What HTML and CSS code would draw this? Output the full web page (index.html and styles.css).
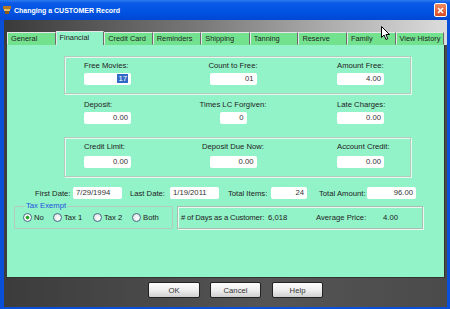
FILE: index.html
```html
<!DOCTYPE html>
<html lang="en">
<head>
<meta charset="UTF-8">
<title>Changing a CUSTOMER Record</title>
<link rel="stylesheet" href="styles.css">
</head>
<body>

<div class="window">
    <!-- Title Bar -->
    <div class="titlebar">
        <svg class="app-icon" width="8" height="8" viewBox="0 0 8 8">
            <rect x="0" y="0" width="8" height="3" fill="#b07a2a"/>
            <rect x="1" y="3" width="6" height="2" fill="#e8c060"/>
            <rect x="2" y="5" width="4" height="3" fill="#8a5a1a"/>
        </svg>
        <span class="title">Changing a CUSTOMER Record</span>
        <span class="close-btn">
            <svg width="7" height="7" viewBox="0 0 7 7">
                <path d="M1 1 L6 6 M6 1 L1 6" stroke="#fff" stroke-width="1.6"/>
            </svg>
        </span>
    </div>

    <div class="frame">
        <!-- Tabs -->
        <div class="tabstrip">
            <span class="tab">General</span>
            <span class="tab active">Financial</span>
            <span class="tab">Credit Card</span>
            <span class="tab">Reminders</span>
            <span class="tab">Shipping</span>
            <span class="tab">Tanning</span>
            <span class="tab">Reserve</span>
            <span class="tab">Family</span>
            <span class="tab">View History</span>
        </div>

        <!-- Financial Panel -->
        <div class="panel">
            <div class="field-row group">
                <div class="cell c1"><label>Free Movies:</label><span class="box"><span class="selected">17</span></span></div>
                <div class="cell c2"><label>Count to Free:</label><span class="box">01</span></div>
                <div class="cell c3"><label>Amount Free:</label><span class="box">4.00</span></div>
            </div>
            <div class="field-row plain">
                <div class="cell c1"><label>Deposit:</label><span class="box">0.00</span></div>
                <div class="cell c2"><label>Times LC Forgiven:</label><span class="box narrow">0</span></div>
                <div class="cell c3"><label>Late Charges:</label><span class="box">0.00</span></div>
            </div>
            <div class="field-row group credit">
                <div class="cell c1"><label>Credit Limit:</label><span class="box">0.00</span></div>
                <div class="cell c2"><label>Deposit Due Now:</label><span class="box">0.00</span></div>
                <div class="cell c3"><label>Account Credit:</label><span class="box">0.00</span></div>
            </div>

            <!-- Dates and totals -->
            <div class="date-row">
                <label class="dl dl-first">First Date:</label>
                <span class="box date">7/29/1994</span>
                <label class="dl dl-last">Last Date:</label>
                <span class="box date">1/19/2011</span>
                <label class="dl dl-items">Total Items:</label>
                <span class="box items">24</span>
                <label class="dl dl-amount">Total Amount:</label>
                <span class="box date right">96.00</span>
            </div>

            <div class="bottom-row">
                <fieldset class="tax">
                    <legend>Tax Exempt</legend>
                    <div class="radios">
                        <span class="opt o1"><span class="radio checked"></span>No</span>
                        <span class="opt o2"><span class="radio"></span>Tax 1</span>
                        <span class="opt o3"><span class="radio"></span>Tax 2</span>
                        <span class="opt"><span class="radio"></span>Both</span>
                    </div>
                </fieldset>
                <div class="days-box">
                    <span class="d1"># of Days as a Customer:</span>
                    <span class="d2">6,018</span>
                    <span class="d3">Average Price:</span>
                    <span>4.00</span>
                </div>
            </div>
        </div>

        <!-- Dialog Buttons -->
        <div class="buttons">
            <button class="ok">OK</button>
            <button class="cancel">Cancel</button>
            <button class="help">Help</button>
        </div>
    </div>

    <!-- Mouse pointer -->
    <svg class="cursor" width="10" height="15" viewBox="0 0 10 15">
        <path d="M0.5 0.5 L0.5 11.5 L3 9 L5 13.5 L6.8 12.7 L4.9 8.5 L8.5 8.5 Z" fill="#fff" stroke="#000" stroke-width="1"/>
    </svg>
</div>

</body>
</html>
```

FILE: styles.css
```css
/* BASE */
* {
    box-sizing: border-box;
}
body {
    margin: 0;
    padding: 0;
    font-family: "Liberation Sans", Arial, sans-serif;
    font-size: 7.7px;
    color: #222;
    background: #fff;
}

/* WINDOW */
.window {
    position: relative;
    width: 450px;
    height: 309px;
    display: flex;
    flex-direction: column;
    overflow: hidden;
}
.titlebar {
    height: 20px;
    display: flex;
    align-items: center;
    padding-left: 3px;
    color: #fff;
    background: linear-gradient(to bottom, #2f7cf0 0%, #0a5ae6 15%, #0052e2 60%, #0048d2 100%);
}
.app-icon {
    margin-right: 3px;
}
.title {
    flex: 1;
    font-weight: bold;
    font-size: 7px;
}
.close-btn {
    width: 13px;
    height: 14px;
    margin-right: 3px;
    display: flex;
    align-items: center;
    justify-content: center;
    border: 1px solid #fff;
    border-radius: 2px;
    background: linear-gradient(to bottom, #f08a60, #d84a20);
}
.frame {
    flex: 1;
    display: flex;
    flex-direction: column;
    border-style: solid;
    border-color: #0a4fd8;
    border-width: 0 3px 2px 4px;
    background: linear-gradient(to right, #3c3c3c, #555 60%, #4a4a4a);
}

/* TABS */
.tabstrip {
    height: 25px;
    display: flex;
    align-items: flex-end;
    padding: 12px 3px 0 3px;
    background: linear-gradient(to right, #3a3a3a, #7a7a7a 45%, #dcdcdc);
}
.tab {
    flex: 1;
    height: 13px;
    line-height: 12px;
    padding-left: 3px;
    font-size: 7.4px;
    background: #72e28e;
    border: 1px solid;
    border-color: #e6e6e6 #6a6a6a transparent #e6e6e6;
    white-space: nowrap;
    overflow: hidden;
}
.tab.active {
    height: 14px;
    background: #92f2c8;
    border-bottom: none;
}

/* PANEL */
.panel {
    height: 233px;
    margin: 0 2px 0 3px;
    padding-top: 11px;
    background: #92f2c8;
    border-right: 1px solid #333;
    border-bottom: 1px solid #333;
}
.field-row {
    display: flex;
    width: 347px;
    margin-left: 57px;
    padding: 4px 0 8px 19px;
    border: 1px solid transparent;
}
.field-row.group {
    border-color: #b4cabd;
    box-shadow: inset 1px 1px 0 #e6f8ee, 1px 1px 0 #e6f8ee;
}
.field-row.plain {
    margin-top: 1px;
}
.field-row.credit {
    margin-top: 4px;
}
.cell {
    display: flex;
    flex-direction: column;
}
.cell label {
    height: 10px;
    line-height: 10px;
    margin-bottom: 2px;
    white-space: nowrap;
}
.field-row.credit .cell label {
    margin-bottom: 4px;
}
.c1 {
    width: 46px;
}
.c2 {
    width: 80px;
    margin-left: 63px;
    align-items: center;
}
.c3 {
    width: 60px;
    margin-left: 64px;
}
.box {
    display: block;
    width: 47px;
    height: 12px;
    line-height: 12px;
    padding-right: 3px;
    text-align: right;
    background: #fff;
    border-radius: 2px;
    color: #333;
}
.box.narrow {
    width: 27px;
}
.selected {
    background: #316ac5;
    color: #fff;
    padding: 0 1px;
}

/* DATES ROW */
.date-row {
    display: flex;
    align-items: center;
    height: 12px;
    margin: 10px 0 0 28px;
}
.dl {
    text-align: right;
    white-space: nowrap;
}
.dl-first {
    width: 34px;
    margin-right: 4px;
}
.dl-last {
    width: 36px;
    margin: 0 5px 0 7px;
}
.dl-items {
    width: 38px;
    margin: 0 5px 0 9px;
}
.dl-amount {
    width: 43px;
    margin: 0 5px 0 12px;
}
.box.date {
    width: 49px;
    text-align: left;
    padding-left: 3px;
}
.box.date.right {
    text-align: right;
}
.box.items {
    width: 36px;
}

/* TAX EXEMPT + DAYS */
.bottom-row {
    display: flex;
    align-items: flex-start;
    margin: 2px 0 0 7px;
}
.tax {
    width: 159px;
    margin: 0;
    padding: 0 0 4px 8px;
    border: 1px solid #b4cabd;
    border-radius: 2px;
}
.tax legend {
    line-height: 10px;
    padding: 0 1px;
    margin-left: 2px;
    color: #1f4fe0;
}
.radios {
    display: flex;
    align-items: center;
    height: 13px;
}
.opt {
    display: flex;
    align-items: center;
}
.o1 {
    width: 30px;
}
.o2 {
    width: 40px;
}
.o3 {
    width: 39px;
}
.radio {
    width: 9px;
    height: 9px;
    margin-right: 2px;
    border: 1px solid #4a6a8a;
    border-radius: 50%;
    background: radial-gradient(circle at 60% 60%, #fff, #d8dcd8);
}
.radio.checked {
    background: radial-gradient(circle, #2a9a2a 0, #38b838 1.8px, #fff 2.2px, #e8ece8);
}
.days-box {
    display: flex;
    align-items: center;
    width: 246px;
    height: 23px;
    margin: 5px 0 0 4px;
    padding-left: 3px;
    border: 1px solid #a8bcb0;
    box-shadow: inset 1px 1px 0 #eef8f2, 1px 1px 0 #eef8f2;
    white-space: nowrap;
}
.d1 {
    width: 87px;
    letter-spacing: -0.15px;
}
.d2 {
    width: 48px;
}
.d3 {
    width: 67px;
}

/* DIALOG BUTTONS */
.buttons {
    display: flex;
    padding: 4px 0 0 144px;
}
.buttons button {
    height: 16px;
    padding: 0;
    font-family: "Liberation Sans", Arial, sans-serif;
    font-size: 7.7px;
    color: #333;
    border: 1px solid #222;
    border-radius: 2px;
    background: linear-gradient(to bottom, #fdfdfd, #ececec 55%, #cfcfcf);
}
.ok {
    width: 52px;
}
.cancel {
    width: 51px;
    margin-left: 10px;
}
.help {
    width: 51px;
    margin-left: 11px;
}

/* POINTER */
.cursor {
    position: absolute;
    left: 381px;
    top: 26px;
}
```
